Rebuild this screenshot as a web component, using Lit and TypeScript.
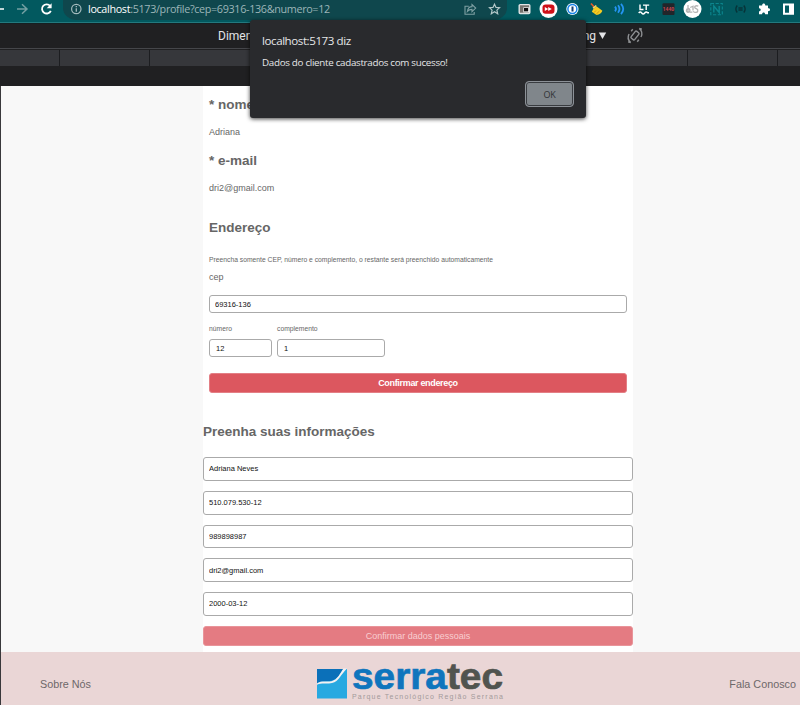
import { LitElement, html, css, svg } from "lit";
import { customElement } from "lit/decorators.js";

const icon = (body: unknown, w = 24, h = 22) =>
  html`<svg class="icon" width=${w} height=${h} viewBox="0 0 ${w} ${h}">${body}</svg>`;

@customElement("browser-bar")
class BrowserBar extends LitElement {
  static styles = css`
    :host { display: flex; align-items: flex-start; height: 22px; background: #02595f; border-bottom: 1px solid #23797e; font-family: "Open Sans", "Noto Sans", sans-serif; }
    svg { display: block; flex: none; }
    .nav { display: flex; width: 63px; }
    .pill { display: flex; width: 446px; height: 20px; border-radius: 0 0 14px 14px / 0 0 12px 12px; background: #0f474d; }
    .url { flex: 1; line-height: 18px; font-size: 10.8px; color: #9cb5b8; white-space: nowrap; letter-spacing: -0.34px; }
    .host { color: #fff; }
    .ext { display: flex; margin-left: 4.6px; }
  `;
  render() {
    return html`
      <div class="nav">${icon(svg`
        <path d="M0 9H4" stroke="#fff" stroke-width="1.5"/>
        <path d="M17 9H27M22 4.2L27 9L22 13.8" fill="none" stroke="#74a0a3" stroke-width="1.5"/>
        <path d="M50.2 6A4.6 4.6 0 1 0 50.8 10.8" fill="none" stroke="#fff" stroke-width="1.8"/>
        <path d="M51.6 3.3V8.2H46.7Z" fill="#fff"/>`, 63)}</div>
      <div class="pill">
        ${icon(svg`<circle cx="13.3" cy="9" r="4.7" fill="none" stroke="#a4bbbd" stroke-width="1.2"/>
          <path d="M13.3 8.2V11.8M13.3 6V7.2" stroke="#a4bbbd" stroke-width="1.3"/>`, 25, 20)}
        <div class="url"><span class="host">localhost</span>:5173/profile?cep=69316-136&amp;numero=12</div>
        ${icon(svg`<path d="M11.8 6.2H8V14.2H17.2V12" fill="none" stroke="#7fa0a3" stroke-width="1.1"/>
          <path d="M10.4 11.4C10.9 8 12.8 6.6 15 6.6V4.5L18.7 8.1L15 11.6V9.4C13 9.4 11.6 10 10.4 11.4Z" fill="none" stroke="#7fa0a3" stroke-width="1.1"/>`, 24, 20)}
        ${icon(svg`<path d="M13.5 4.2L15 7.4L18.5 7.7L15.9 10.1L16.7 13.7L13.5 11.8L10.3 13.7L11.1 10.1L8.5 7.7L12 7.4Z" fill="none" stroke="#b5c8c9" stroke-width="1.2"/>`, 26, 20)}
      </div>
      <div class="ext">
        ${icon(svg`<rect x="7.2" y="4.6" width="10.6" height="8.9" rx="1" fill="#77736f" stroke="#e2e5e6" stroke-width="1.4"/><rect x="11.4" y="7.4" width="6" height="5" fill="#fff"/><rect x="12" y="8" width="4.2" height="3.4" fill="#111"/>`)}
        ${icon(svg`<circle cx="12.5" cy="9" r="9" fill="#fff"/><rect x="6.5" y="4.4" width="12" height="9.4" rx="3.2" fill="#cf1018"/><path d="M8.8 6.9L12.2 9L8.8 11.1ZM12.2 6.9L15.8 9L12.2 11.1Z" fill="#fff"/>`)}
        ${icon(svg`<circle cx="12.4" cy="9" r="6.1" fill="#fff"/><circle cx="12.4" cy="9" r="4.5" fill="#fff" stroke="#1783e8" stroke-width="1.5"/><rect x="11.5" y="6.5" width="2" height="5" fill="#173f70"/>`)}
        ${icon(svg`<path d="M7 3.5L11 8" stroke="#e95b28" stroke-width="1.6"/><path d="M12.4 6.2L9.3 8.9L7.8 11.7L12.5 15C15.5 14.6 17.8 12.7 18.4 10.8Z" fill="#f6cc21"/><path d="M9 8.2L12.2 5.5" stroke="#f2e17a" stroke-width="1.3"/><path d="M10 12.5L12 10.5M12.3 14L15.5 11" stroke="#c68d16" stroke-width=".8"/>`)}
        ${icon(svg`<g fill="none" stroke="#2494f2" stroke-width="1.8"><path d="M7 6.7Q9 9 7 11.3"/><path d="M10 5.3Q13 9 10 12.7"/><path d="M13 3.9Q17.5 9 13 14.1"/></g>`)}
        ${icon(svg`<path d="M8 4.5V9.5H11.5M11 5.1H17.2M14.2 5V10M6.7 13Q8.2 11 9.7 13T12.7 13T15.7 12.8H17" fill="none" stroke="#fff" stroke-width="1.4"/>`)}
        ${icon(svg`<rect x="6.5" y="3.2" width="12" height="11.8" rx="1" fill="#22252a"/><text x="12.5" y="10.8" text-anchor="middle" font-family="Roboto, sans-serif" font-size="5" font-weight="700" fill="#c84852">1440</text>`)}
        ${icon(svg`<circle cx="12.5" cy="9" r="9" fill="#fff"/><g fill="none" stroke="#b4b4b4" stroke-width="1.3"><path d="M8 5V12.3C5.8 12.3 5.9 8.5 8.2 8.5C10.5 8.5 10.5 12.3 8 12.3"/><path d="M12.4 12.2H9.8M10.2 7.5L13 6.2V10.5"/><path d="M18.3 6.2C15.8 5 14 6.5 15 8C16 9 18.4 8.8 17.8 11C17.4 13 14.4 12.7 13.2 11.3"/></g>`)}
        ${icon(svg`<rect x="6.8" y="3.5" width="11.5" height="11.2" fill="none" stroke="#0b858d" stroke-width="1.1" stroke-dasharray="3.2 1.6"/><path d="M9.8 12.5V6L15.2 12.5V6" fill="none" stroke="#0b858d" stroke-width="1.4"/>`)}
        ${icon(svg`<path d="M9.2 5.5Q6.5 9 9.2 12.5M15.8 5.5Q18.5 9 15.8 12.5M10.4 8H14.6M10.4 10H14.6" fill="none" stroke="#073338" stroke-width="1.4"/>`)}
        ${icon(svg`<path d="M7 5.4H10.2C9.8 2.8 13.6 2.8 13.2 5.4H16V8.3C18.7 7.8 18.7 11.6 16 11.1V14.3H13.1C13.3 11.9 9.9 11.9 10.1 14.3H7V11.2C9.3 11.4 9.3 8 7 8.2Z" fill="#fff"/>`)}
        ${icon(svg`<path d="M7 3.5H18V14.7H7ZM9 5.5V12.7H13V5.5Z" fill="#fff" fill-rule="evenodd"/>`)}
      </div>`;
  }
}

@customElement("device-bar")
class DeviceBar extends LitElement {
  static styles = css`
    :host { display: block; background: #202022; font-family: Roboto, sans-serif; }
    .top { display: flex; align-items: center; justify-content: space-between; height: 24px; padding: 0 144px 0 218px; border-top: 1px solid #151f21; border-bottom: 1px solid #45464a; color: #e3e4e6; font-size: 12px; }
    .right { display: flex; align-items: center; }
    .ruler { display: grid; grid-template-columns: 60px 90px 538px 90px 22px; height: 16px; padding: 1px 0 20px; }
    .seg { background: #36373b; border-right: 1px solid #1c1d20; }
    .seg:last-child { border-right: 0; }
  `;
  render() {
    return html`
      <div class="top"><span>Dimensions</span><span class="right">Throttling
        <svg width="60" height="24" viewBox="0 0 60 24"><path d="M2.8 8.5H10.2L6.5 15Z" fill="#e3e4e6"/>
          <g transform="translate(39 11.5) rotate(38)" fill="none" stroke="#8e9093" stroke-width="1.4"><rect x="-2.3" y="-4.4" width="4.6" height="8.8" rx="1.2"/><path d="M1 8.2A7 7 0 0 1 -5.6 2.5M-5.6 -1V-3.5M-1 -8.2A7 7 0 0 1 5.6 -2.5M5.6 1V3.5M1 8.2L-1.5 9.3M-1 -8.2L1.5 -9.3"/></g>
        </svg></span></div>
      <div class="ruler">${[0, 1, 2, 3, 4].map(() => html`<div class="seg"></div>`)}</div>`;
  }
}

@customElement("alert-dialog")
class AlertDialog extends LitElement {
  static styles = css`
    :host { box-sizing: border-box; display: flex; flex-direction: column; width: 336px; height: 98px; padding: 12px 12px 11px 12px; background: #292a2d; border-radius: 3px; color: #e5e6e8; font-family: "Open Sans", "Noto Sans", sans-serif; box-shadow: 0 1px 4px rgba(0,0,0,.75); }
    .title { font-size: 11.6px; line-height: 18px; letter-spacing: -0.44px; }
    .msg { font-size: 9.8px; line-height: 14px; margin-top: 6px; letter-spacing: -0.3px; }
    .ok { box-sizing: border-box; align-self: flex-end; margin-top: auto; width: 49px; height: 26px; padding: 0; border: 1.5px solid #8c9197; border-radius: 4px; background: #80868b; box-shadow: inset 0 0 0 1px #393c40; color: #303236; font: 9px "Open Sans", sans-serif; letter-spacing: -0.2px; }
  `;
  render() {
    return html`<div class="title">localhost:5173 diz</div>
      <div class="msg">Dados do cliente cadastrados com sucesso!</div>
      <button class="ok">OK</button>`;
  }
}

@customElement("profile-form")
class ProfileForm extends LitElement {
  static styles = css`
    :host { display: block; box-sizing: border-box; width: 430px; height: 566px; margin-left: 202px; background: #fff; color: #666; font-family: "Liberation Sans", Arial, sans-serif; }
    .account { padding: 9px 6px 0; }
    h2 { margin: 0; font-size: 13.5px; line-height: 20px; font-weight: 700; }
    .value { font-size: 9px; line-height: 12px; }
    .name { margin: 11px 0 13px; }
    .mail { margin: 11px 0 24px; }
    .hint { margin-top: 17px; font-size: 6.75px; line-height: 10px; white-space: nowrap; }
    .cep { margin: 6px 0 12px; }
    input { box-sizing: border-box; display: block; width: 100%; border: 1px solid #aaa; border-radius: 3px; background: #fff; color: #111; font: 7.5px "Liberation Sans", Arial, sans-serif; padding: 0 5px; margin: 0; outline: 0; }
    .small { height: 18px; }
    .pair { display: grid; grid-template-columns: 63px 108px; column-gap: 5px; margin-top: 11px; }
    .pair input { padding: 0 6px; }
    .label { font-size: 6.75px; line-height: 10px; display: block; margin-bottom: 5px; }
    button { display: block; width: 100%; height: 20px; padding: 0; border: 1px solid #e37f85; border-radius: 3px; background: #dc575f; color: #fff; font: 700 9px "Liberation Sans", Arial, sans-serif; }
    .address { margin-top: 16px; letter-spacing: -0.33px; }
    .heading { margin-top: 29px; }
    .fields { display: grid; gap: 10px; margin-top: 15px; }
    .fields input { height: 23.75px; }
    .personal { margin-top: 10px; background: #e47b82; border-color: #e9949a; color: #f8ced1; font-weight: 400; }
  `;
  render() {
    const rows = ["Adriana Neves", "510.079.530-12", "989898987", "dri2@gmail.com", "2000-03-12"];
    return html`
      <section class="account">
        <h2>* nome</h2><div class="value name">Adriana</div>
        <h2>* e-mail</h2><div class="value mail">dri2@gmail.com</div>
        <h2>Endereço</h2>
        <div class="hint">Preencha somente CEP, número e complemento, o restante será preenchido automaticamente</div>
        <div class="value cep">cep</div>
        <input class="small" .value=${"69316-136"} />
        <div class="pair">
          <label><span class="label">número</span><input class="small" .value=${"12"} /></label>
          <label><span class="label">complemento</span><input class="small" .value=${"1"} /></label>
        </div>
        <button class="address">Confirmar endereço</button>
      </section>
      <h2 class="heading">Preenha suas informações</h2>
      <div class="fields">${rows.map((v) => html`<input .value=${v} />`)}</div>
      <button class="personal">Confirmar dados pessoais</button>`;
  }
}

@customElement("site-footer")
class SiteFooter extends LitElement {
  static styles = css`
    :host { display: flex; align-items: center; justify-content: space-between; box-sizing: border-box; height: 53px; padding: 0 4px 0 39px; background: #ead6d6; font: 10.8px "Liberation Sans", Arial, sans-serif; color: #6d6869; }
    .link { margin-top: 11px; }
    .logo { display: block; margin-left: 2px; }
  `;
  render() {
    return html`<span class="link">Sobre Nós</span>
      <svg class="logo" width="190" height="53" viewBox="0 0 190 53">
        <path d="M1 17H31V46.5H1Z" fill="#27a9e1"/>
        <path d="M1 17H27C24 23 21 28 14 29C9 29.5 5 29 1 31Z" fill="#0b70b9"/>
        <path d="M1 31.4C6 28 10 30.5 15.5 29.2C22 27.5 24 21 27.5 16.5H31C25 22 23 29.5 16 31C10 32.3 6 30.5 1 32.7Z" fill="#f5f1f2"/>
        <text x="36" y="37.3" font-family="Liberation Sans, Arial, sans-serif" font-weight="700" font-size="37.5" textLength="151" lengthAdjust="spacingAndGlyphs" fill="#0f75bd" stroke="#0f75bd" stroke-width=".7">serra<tspan fill="#51544f" stroke="#51544f">tec</tspan></text>
        <text x="36" y="47" font-family="Liberation Sans, Arial, sans-serif" font-size="7" textLength="151" fill="#a39a9b">Parque Tecnológico Região Serrana</text>
      </svg>
      <span class="link">Fala Conosco</span>`;
  }
}

@customElement("app-root")
class AppRoot extends LitElement {
  static styles = css`
    :host { display: block; position: relative; width: 800px; height: 705px; overflow: hidden; background: #f8f8f8; }
    .page { border-left: 1px solid #39383b; }
    .dialog { position: absolute; left: 250px; top: 20px; }
  `;
  render() {
    return html`<browser-bar></browser-bar><device-bar></device-bar>
      <main class="page"><profile-form></profile-form><site-footer></site-footer></main>
      <alert-dialog class="dialog"></alert-dialog>`;
  }
}
